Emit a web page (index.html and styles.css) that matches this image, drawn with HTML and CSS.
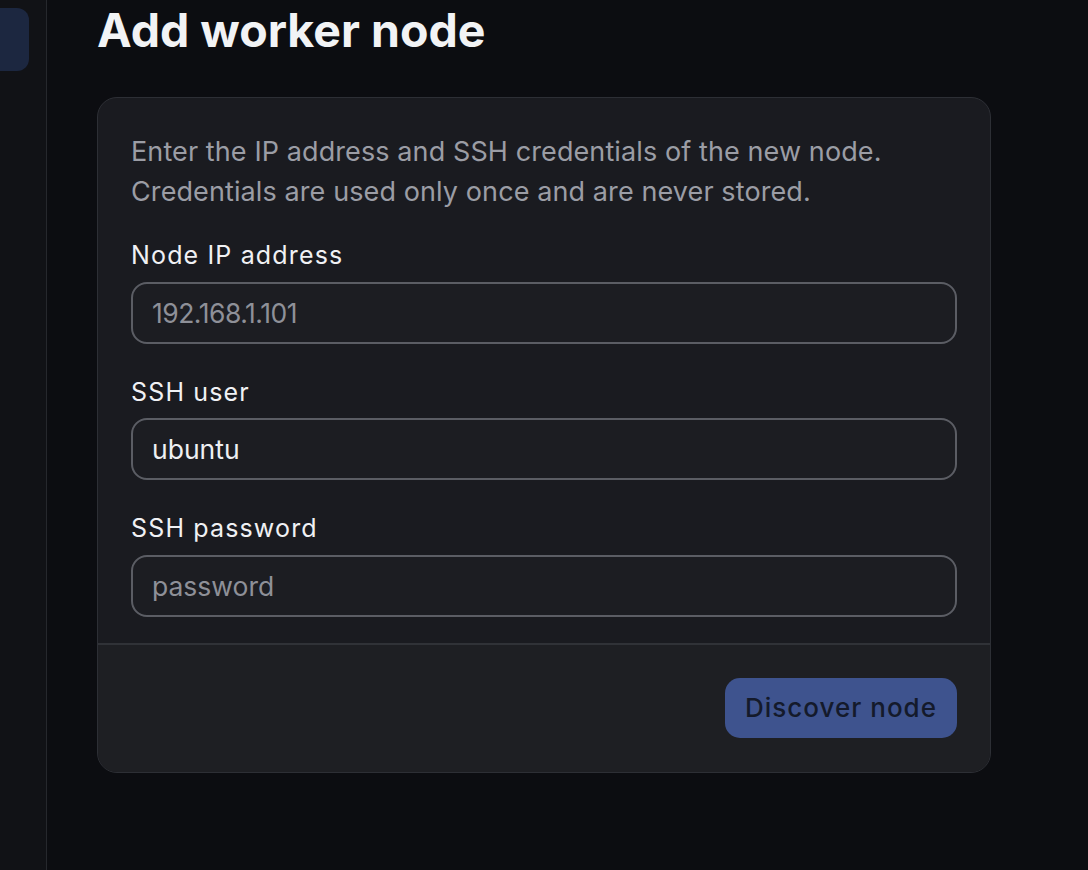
FILE: index.html
```html
<!DOCTYPE html>
<html lang="en">
<head>
    <meta charset="UTF-8">
    <meta name="viewport" content="width=device-width, initial-scale=1.0">
    <title>Add worker node</title>
    <link rel="stylesheet" href="styles.css">
</head>
<body>
    <div class="layout">
        <aside class="sidebar">
            <div class="nav-item active"></div>
        </aside>

        <main class="content">
            <h1>Add worker node</h1>

            <div class="card">
                <div class="card-body">
                    <p class="intro">
                        Enter the IP address and SSH credentials of the new node.<br>
                        Credentials are used only once and are never stored.
                    </p>

                    <div class="form-group">
                        <label for="nodeIp">Node IP address</label>
                        <input type="text" id="nodeIp" class="input-ip" placeholder="192.168.1.101">
                    </div>

                    <div class="form-group">
                        <label for="sshUser">SSH user</label>
                        <input type="text" id="sshUser" value="ubuntu">
                    </div>

                    <div class="form-group">
                        <label for="sshPassword">SSH password</label>
                        <input type="password" id="sshPassword" placeholder="password">
                    </div>
                </div>

                <div class="card-footer">
                    <button class="btn-primary">Discover node</button>
                </div>
            </div>
        </main>
    </div>
</body>
</html>
```

FILE: styles.css
```css
* {
    box-sizing: border-box;
    margin: 0;
    padding: 0;
    font-family: Inter, "Noto Sans", sans-serif;
}

html, body {
    height: 100%;
    background-color: #0c0d11;
    color: #f2f3f5;
    overflow: hidden;
}

.layout {
    display: flex;
    height: 100%;
}

.sidebar {
    width: 47px;
    flex-shrink: 0;
    background-color: #111216;
    border-right: 1px solid #26282d;
    overflow: hidden;
}

.nav-item {
    width: 60px;
    height: 63px;
    margin-top: 8px;
    margin-left: -31px;
    border-radius: 12px;
}

.nav-item.active {
    background-color: #1c2740;
}

.content {
    flex: 1;
    padding: 3px 50px 0 50px;
}

h1 {
    font-size: 46.5px;
    font-weight: 700;
    line-height: 1.2;
    color: #f2f3f5;
    margin-bottom: 38px;
}

.card {
    width: 894px;
    border: 1px solid #2d2f35;
    border-radius: 20px;
    background-color: #1a1b20;
    overflow: hidden;
}

.card-body {
    padding: 34px 33px 26px 33px;
}

.intro {
    font-size: 27px;
    line-height: 40px;
    color: #9b9da5;
    letter-spacing: 0.1px;
    margin-bottom: 27.5px;
}

.form-group + .form-group {
    margin-top: 32px;
}

.form-group label {
    display: block;
    font-size: 25px;
    font-weight: 400;
    line-height: 32px;
    letter-spacing: 1.15px;
    margin-bottom: 10.5px;
    color: #f0f1f4;
}

.form-group input {
    display: block;
    width: 100%;
    height: 62px;
    padding: 0 19px;
    border: 2px solid #5b5d64;
    border-radius: 16px;
    background-color: #1c1d22;
    color: #eef0f3;
    font-size: 26.5px;
    outline: none;
}

.form-group input::placeholder {
    color: #8e9098;
}

.form-group .input-ip {
    letter-spacing: -0.5px;
}

.card-footer {
    display: flex;
    justify-content: flex-end;
    padding: 33px 33px 34px;
    border-top: 2px solid #303237;
    background-color: #1e1f23;
}

.btn-primary {
    width: 232px;
    height: 60px;
    border: none;
    border-radius: 15px;
    background-color: #3e538e;
    color: #141a2b;
    font-size: 26px;
    font-weight: 500;
    letter-spacing: 1px;
    cursor: pointer;
}
```
